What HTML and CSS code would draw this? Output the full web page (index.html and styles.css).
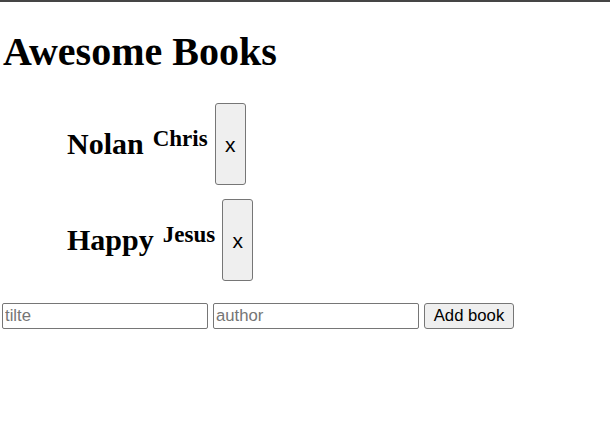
FILE: index.html
```html
<!DOCTYPE html>
<html>
<head>
<meta charset="utf-8">
<link rel="stylesheet" href="styles.css">
</head>
<body>
<h1 class="title">Awesome Books</h1>
<ul class="books">
  <li class="book">
    <h2 class="book-title">Nolan</h2>
    <h3 class="book-author">Chris</h3>
    <button class="remove">x</button>
  </li>
  <li class="book">
    <h2 class="book-title">Happy</h2>
    <h3 class="book-author">Jesus</h3>
    <button class="remove">x</button>
  </li>
</ul>
<form class="add-form">
  <input class="field" type="text" placeholder="tilte">
  <input class="field" type="text" placeholder="author">
  <button class="add" type="button">Add book</button>
</form>
</body>
</html>
```

FILE: styles.css
```css
html, body {
  margin: 0;
  padding: 0;
  background: #fff;
}
body {
  border-top: 2px solid #454545;
  font-family: "Liberation Serif", "Times New Roman", serif;
  color: #000;
}
.title {
  margin: 27px 0 0 3px;
  font-size: 40px;
  line-height: 46px;
  font-weight: bold;
}
.books {
  list-style: none;
  margin: 28px 0 0 0;
  padding: 0 0 0 67px;
  display: flex;
  flex-direction: column;
  gap: 14px;
}
.book {
  display: flex;
  align-items: flex-start;
  gap: 7px;
  height: 82px;
}
.book-title {
  margin: 26px 2px 0 0;
  font-size: 30px;
  line-height: 30px;
  font-weight: bold;
}
.book-author {
  margin: 24px 0 0 0;
  font-size: 23px;
  line-height: 23px;
  font-weight: bold;
}
.remove {
  box-sizing: border-box;
  width: 31px;
  height: 82px;
  margin: 0;
  padding: 0;
  font-family: "Liberation Sans", Arial, sans-serif;
  font-size: 21px;
  line-height: 1;
  color: #000;
  background: #efefef;
  border: 1px solid #767676;
  border-radius: 3px;
}
.add-form {
  display: flex;
  gap: 5px;
  margin: 22px 0 0 2px;
}
.field {
  box-sizing: border-box;
  width: 206px;
  height: 26px;
  margin: 0;
  padding: 0 2px;
  font-family: "Liberation Sans", Arial, sans-serif;
  font-size: 16.7px;
  border: 1px solid #767676;
  border-radius: 2px;
  background: #fff;
}
.field::placeholder {
  color: #757575;
}
.add {
  box-sizing: border-box;
  width: 90px;
  height: 26px;
  margin: 0;
  padding: 0;
  font-family: "Liberation Sans", Arial, sans-serif;
  font-size: 16.7px;
  color: #000;
  background: #efefef;
  border: 1px solid #767676;
  border-radius: 3px;
}
```
